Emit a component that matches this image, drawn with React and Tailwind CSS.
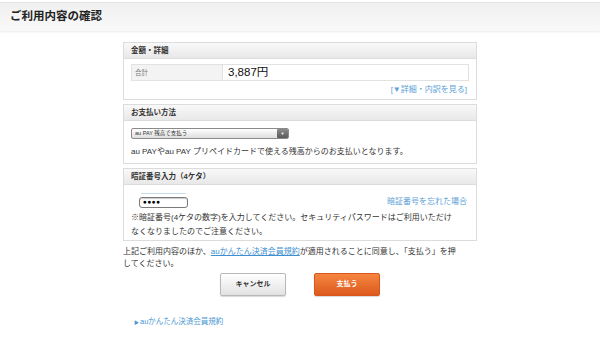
import React from "react";

function Panel({ title, children }) {
  return (
    <section className="border border-[#dcdcdc] bg-white">
      <div className="flex h-[16px] items-center border-b border-[#dcdcdc] bg-linear-to-b from-[#f9f9f9] to-[#e8e8e8] px-[7px] text-[7.5px] font-bold text-[#333]">
        {title}
      </div>
      {children}
    </section>
  );
}

export default function App() {
  return (
    <div className="min-h-[337px] bg-white pt-[2px] font-['Liberation_Sans','Noto_Sans_CJK_JP',sans-serif] text-[#333]">
      {/* page title bar */}
      <div className="flex h-[29px] items-center border-t border-[#e4e4e4] bg-linear-to-b from-[#f0f0f0] to-[#f9f9f9] pl-[10px] shadow-[0_1px_2px_rgba(0,0,0,0.08)]">
        <h1 className="text-[11.5px] font-bold text-[#222]">ご利用内容の確認</h1>
      </div>

      <div className="mx-auto mt-[11px] w-[354px]">
        <Panel title="金額・詳細">
          <div className="px-[7px] pt-[5px] pb-[4px]">
            <div className="flex h-[17px] border border-[#e2e2e2]">
              <div className="flex w-[90px] items-center bg-[#f3f3f3] pl-[3px] text-[6.5px] text-[#777]">
                合計
              </div>
              <div className="flex flex-1 items-center border-l border-[#e2e2e2] bg-white pl-[5px] text-[11.5px] text-[#111]">
                3,887円
              </div>
            </div>
            <div className="mt-[3px] pr-[2px] text-right text-[8px] leading-[11px] text-[#5ba0d6]">
              [▼詳細・内訳を見る]
            </div>
          </div>
        </Panel>

        <div className="mt-[4px]">
          <Panel title="お支払い方法">
            <div className="px-[7px] pt-[7px] pb-[5px]">
              <div className="flex h-[11px] w-[158px] items-center justify-between rounded-[2px] border border-[#8a8a8a] bg-linear-to-b from-[#ffffff] to-[#dedede] pl-[3px]">
                <span className="text-[5.5px] leading-none text-[#333]">au PAY 残高で支払う</span>
                <span className="flex h-[9px] w-[11px] items-center justify-center rounded-[1px] bg-linear-to-b from-[#8c8c8c] to-[#5a5a5a] text-[4px] text-white">
                  ▼
                </span>
              </div>
              <p className="mt-[7px] text-[8px] leading-[12px] text-[#333]">
                au PAYやau PAY プリペイドカードで使える残高からのお支払いとなります。
              </p>
            </div>
          </Panel>
        </div>

        <div className="mt-[4px]">
          <Panel title="暗証番号入力（4ケタ）">
            <div className="px-[7px] pt-[8px] pb-[1px]">
              <div className="flex items-start justify-between">
                <div className="pl-[8px]">
                  <div className="ml-[2px] h-[1px] w-[45px] bg-[#c4def3]" />
                  <div className="mt-[3px] flex h-[11px] w-[49px] items-center rounded-[3px] border border-[#7a7a7a] bg-white pl-[3px] text-[6.5px] leading-none tracking-[0.5px] text-black shadow-[inset_0_1px_1px_rgba(0,0,0,0.2)]">
                    ●●●●
                  </div>
                </div>
                <span className="mt-[3px] pr-[2px] text-[8px] leading-[11px] text-[#5ba0d6]">
                  暗証番号を忘れた場合
                </span>
              </div>
              <p className="mt-[3px] text-[8px] leading-[14px] text-[#333]">
                <span className="block">
                  ※暗証番号(4ケタの数字)を入力してください。セキュリティパスワードはご利用いただけ
                </span>
                <span className="block">なくなりましたのでご注意ください。</span>
              </p>
            </div>
          </Panel>
        </div>

        <p className="mt-[5px] text-[8px] leading-[11.5px] text-[#333]">
          <span className="block whitespace-nowrap">
            上記ご利用内容のほか、
            <span className="text-[#3d8fd1] underline">auかんたん決済会員規約</span>
            が適用されることに同意し、「支払う」を押
          </span>
          <span className="block">してください。</span>
        </p>

        <div className="mt-[4px] flex justify-center gap-[28px]">
          <button className="flex h-[23px] w-[66px] items-center justify-center rounded-[2px] border border-[#b8b8b8] bg-linear-to-b from-[#ffffff] to-[#e2e2e2] text-[7px] font-bold text-[#333] shadow-[0_1px_1px_rgba(0,0,0,0.15)]">
            キャンセル
          </button>
          <button className="flex h-[23px] w-[66px] items-center justify-center rounded-[2px] border border-[#d8561c] bg-linear-to-b from-[#f5853f] to-[#dc5a1c] text-[7px] font-bold text-white shadow-[0_1px_1px_rgba(0,0,0,0.15)]">
            支払う
          </button>
        </div>

        <div className="mt-[20px] pl-[11px] text-[7.5px] leading-[12px] text-[#4a97d4]">
          <span className="mr-[1px] text-[5px]">▶</span>auかんたん決済会員規約
        </div>
      </div>
    </div>
  );
}
